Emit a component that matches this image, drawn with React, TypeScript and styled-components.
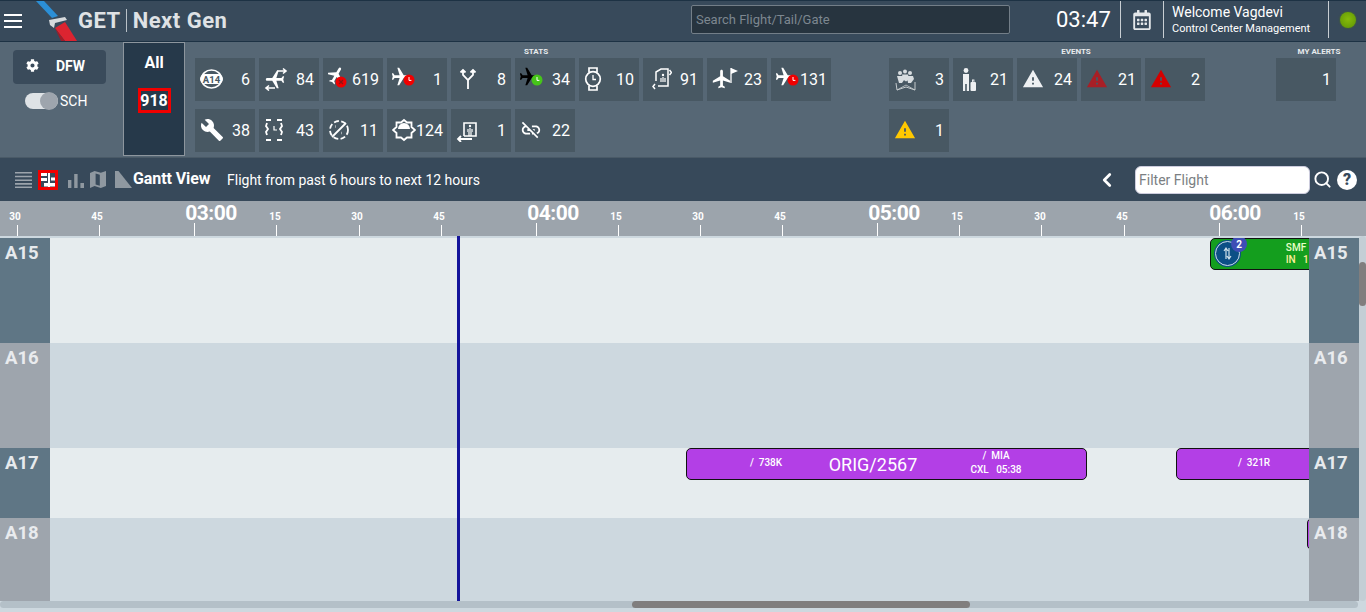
import { createGlobalStyle, styled } from "styled-components";
import { FaCog, FaRegCalendarAlt } from "react-icons/fa";
import { MdBuild, MdLinkOff, MdWarning } from "react-icons/md";
import { ChevronLeft, Search } from "lucide-react";
import type { ReactNode } from "react";

const GlobalStyle = createGlobalStyle`
  html, body {
    margin: 0;
    height: 612px;
    overflow: hidden;
    background: #cdd8df;
    font-family: Roboto, "Liberation Sans", sans-serif;
  }
  * { box-sizing: border-box; }
`;

const Page = styled.div`
  width: 1366px;
  height: 612px;
  display: flex;
  flex-direction: column;
  overflow: hidden;
`;

/* header */
const Header = styled.header`
  height: 42px;
  display: flex;
  align-items: center;
  background: #384a5b;
  border-top: 1px solid #1d3244;
  border-bottom: 1px solid #1d3244;
  flex: none;
`;

const Burger = styled.div`
  width: 18px;
  margin-left: 4px;
  display: flex;
  flex-direction: column;
  gap: 4px;
  i {
    height: 2px;
    background: #fff;
    display: block;
  }
`;

const LogoWrap = styled.div`
  width: 42px;
  height: 40px;
  margin-left: 14px;
  overflow: hidden;
`;

const Brand = styled.div`
  display: flex;
  align-items: center;
  width: 613px;
  padding: 0 0 2px 0;
  font-size: 22px;
  font-weight: 700;
  color: #dfe2e5;
  letter-spacing: 0.5px;
  span + span {
    margin-left: 5px;
    padding-left: 6px;
    border-left: 1px solid #b9c1c8;
    line-height: 23px;
  }
`;

const SearchBox = styled.input`
  width: 319px;
  height: 29px;
  margin-bottom: 3px;
  background: #27343f;
  border: 1px solid #737e88;
  border-radius: 2px;
  padding: 0 4px;
  color: #fff;
  font: 13px Roboto, sans-serif;
  outline: none;
  &::placeholder {
    color: #7d8790;
    opacity: 1;
  }
`;

const Clock = styled.div`
  width: 64px;
  margin-left: 46px;
  padding-bottom: 3px;
  font-size: 22px;
  color: #fff;
  flex: none;
`;

const HeaderCell = styled.div<{ $w: number }>`
  width: ${(p) => p.$w}px;
  height: 37px;
  border-left: 1px solid #c8ced3;
  display: flex;
  align-items: center;
  justify-content: center;
  color: #e4e7ea;
  flex: none;
  margin-top: -3px;
`;

const Welcome = styled.div`
  width: 100%;
  padding-left: 8px;
  color: #fff;
  div:first-child {
    font-size: 14px;
    line-height: 17px;
  }
  div:last-child {
    font-size: 11px;
    line-height: 15px;
  }
`;

const Led = styled.div`
  width: 16px;
  height: 16px;
  border-radius: 50%;
  background: radial-gradient(circle at 50% 45%, #86bb0a, #5d9405);
  box-shadow: 0 0 2px #4f7a10;
`;

/* stats */
const StatsBar = styled.section`
  height: 116px;
  display: flex;
  background: #566775;
  border-bottom: 1px solid #4a5a67;
  flex: none;
`;

const Station = styled.div`
  width: 123px;
  padding: 8px 0 0 13px;
  flex: none;
`;

const StationBtn = styled.div`
  width: 93px;
  height: 34px;
  background: #3a4b5b;
  border-radius: 4px;
  display: flex;
  align-items: center;
  color: #fff;
  font-size: 14px;
  font-weight: 700;
  padding: 0 0 3px 13px;
  gap: 17px;
`;

const ToggleRow = styled.div`
  display: flex;
  align-items: center;
  gap: 2px;
  margin: 9px 0 0 12px;
  font-size: 14px;
  color: #fff;
`;

const Toggle = styled.div`
  width: 33px;
  height: 16px;
  background: #dfe3e6;
  border-radius: 8px;
  position: relative;
  &::after {
    content: "";
    position: absolute;
    right: 0;
    top: -1px;
    width: 18px;
    height: 18px;
    border-radius: 50%;
    background: #9ea5ad;
  }
`;

const AllCard = styled.div`
  width: 62px;
  height: 114px;
  margin-right: 10px;
  background: #26394a;
  border: 1px solid #8d969e;
  display: flex;
  flex-direction: column;
  align-items: center;
  color: #fff;
  font-weight: 700;
  font-size: 16px;
  flex: none;
  padding-top: 10px;
`;

const AllCount = styled.div`
  margin-top: 16px;
  padding: 0 1px;
  width: 33px;
  height: 25px;
  border: 3px solid #f00000;
  display: flex;
  align-items: center;
  justify-content: center;
  font-size: 16px;
`;

const Group = styled.div<{ $w: number; $label: number }>`
  width: ${(p) => p.$w}px;
  flex: none;
  h6 {
    margin: 5px 0 0;
    height: 11px;
    width: ${(p) => p.$label}px;
    text-align: center;
    font-size: 8px;
    font-weight: 700;
    line-height: 9px;
    color: #e8ebee;
  }
`;

const TileGrid = styled.div<{ $cols: number }>`
  display: flex;
  flex-wrap: wrap;
  gap: 8px 4px;
  max-width: ${(p) => p.$cols * 64}px;
`;

const TileBox = styled.div`
  width: 60px;
  height: 43px;
  background: #485863;
  display: flex;
  align-items: center;
  justify-content: space-between;
  padding: 0 5px 1px 5px;
  color: #fff;
  font-size: 16px;
  position: relative;
  svg {
    flex: none;
    display: block;
  }
`;

const Count = styled.span`
  margin-left: auto;
`;

/* toolbar */
const Toolbar = styled.section`
  height: 43px;
  display: flex;
  align-items: center;
  background: #37495a;
  flex: none;
  padding-left: 15px;
  color: #fff;
`;

const ActiveView = styled.div`
  width: 20px;
  height: 20px;
  border: 3px solid #f00000;
  display: flex;
  align-items: center;
  justify-content: center;
  margin: 0 10px 0 6px;
`;

const IconGap = styled.span<{ $w: number }>`
  width: ${(p) => p.$w}px;
  flex: none;
`;

const ViewTitle = styled.div`
  font-weight: 700;
  font-size: 16px;
  letter-spacing: -0.1px;
  width: 94px;
  margin-left: 1px;
  padding-bottom: 2px;
`;

const ViewHint = styled.div`
  font-size: 14px;
  width: 873px;
`;

const BackIcon = styled(ChevronLeft)`
  margin-left: -4px;
`;

const FilterBox = styled.input`
  width: 175px;
  height: 28px;
  margin-left: 17px;
  border: 1px solid #ccd;
  border-radius: 6px;
  padding: 0 3px;
  background: #fff;
  font: 14px Roboto, sans-serif;
  outline: none;
  &::placeholder {
    color: #7b7f83;
    opacity: 1;
  }
`;

const FindIcon = styled(Search)`
  margin-left: 3px;
`;

const HelpDot = styled.div`
  width: 20px;
  height: 20px;
  margin-left: 5px;
  border-radius: 50%;
  background: #fff;
  color: #37495a;
  font-weight: 900;
  font-size: 16px;
  display: flex;
  align-items: center;
  justify-content: center;
`;

/* gantt */
const Ruler = styled.div`
  height: 35px;
  position: relative;
  background: #9ca4ac;
  flex: none;
`;

const Tick = styled.div<{ $x: number; $major?: boolean }>`
  position: absolute;
  left: ${(p) => p.$x}px;
  bottom: 0;
  width: 1px;
  height: ${(p) => (p.$major ? 11 : 13)}px;
  background: #fff;
`;

const TickLabel = styled.div<{ $x: number; $major?: boolean }>`
  position: absolute;
  left: ${(p) => p.$x}px;
  transform: translateX(-50%);
  color: #fff;
  font-weight: 700;
  font-size: ${(p) => (p.$major ? 21 : 10)}px;
  top: ${(p) => (p.$major ? 0 : 10)}px;
  line-height: ${(p) => (p.$major ? 25 : 12)}px;
  letter-spacing: ${(p) => (p.$major ? -0.5 : 0)}px;
`;

const GanttBody = styled.div`
  height: 365px;
  padding-top: 2px;
  position: relative;
  overflow: hidden;
  flex: none;
  background: #cdd8df;
`;

const Row = styled.div<{ $h: number; $alt?: boolean }>`
  height: ${(p) => p.$h}px;
  display: flex;
  background: ${(p) => (p.$alt ? "#cdd8df" : "#e6ecee")};
  width: 1359px;
`;

const GateLabel = styled.div<{ $alt?: boolean }>`
  width: 50px;
  flex: none;
  background: ${(p) => (p.$alt ? "#9ea5ad" : "#5f7685")};
  color: ${(p) => (p.$alt ? "#e9ebee" : "#e6eaed")};
  font-size: 18.5px;
  font-weight: 700;
  line-height: 23px;
  padding: 4px 0 0 5px;
  position: relative;
  z-index: 3;
`;

const Lane = styled.div`
  flex: 1;
  position: relative;
  overflow: hidden;
`;

const NowLine = styled.div`
  position: absolute;
  left: 457px;
  top: 0;
  bottom: 0;
  width: 3px;
  background: #15159b;
  z-index: 2;
`;

const Bar = styled.div<{ $color: string; $x: number; $w: number }>`
  position: absolute;
  top: 0;
  left: ${(p) => p.$x}px;
  width: ${(p) => p.$w}px;
  height: 32px;
  background: ${(p) => p.$color};
  border: 1px solid #111;
  border-radius: 5px;
  color: #fff;
`;

const BarText = styled.div<{ $x: number; $y: number; $size?: number; $color?: string }>`
  position: absolute;
  left: ${(p) => p.$x}px;
  top: ${(p) => p.$y}px;
  white-space: pre;
  font-size: ${(p) => p.$size ?? 10}px;
  font-weight: ${(p) => (p.$size ? 400 : 500)};
  line-height: ${(p) => (p.$size ?? 10) + 2}px;
  color: ${(p) => p.$color ?? "#fff"};
  transform: translateX(-50%);
`;

const TransferDot = styled.div`
  position: absolute;
  left: 4px;
  top: 2px;
  width: 25px;
  height: 25px;
  border-radius: 50%;
  background: #0c4f86;
  border: 1px solid #cfe0ea;
  box-shadow: 0 0 0 1px #0c4f86;
  display: flex;
  align-items: center;
  justify-content: center;
`;

const CountBadge = styled.div`
  position: absolute;
  left: 20px;
  top: -3px;
  width: 16px;
  height: 16px;
  border-radius: 50%;
  background: #3f4db5;
  color: #fff;
  font-size: 10px;
  font-weight: 700;
  display: flex;
  align-items: center;
  justify-content: center;
  z-index: 1;
`;

const HScroll = styled.div`
  height: 7px;
  width: 1358px;
  background: #b4c0c8;
  border-radius: 4px;
  position: relative;
  flex: none;
  &::after {
    content: "";
    position: absolute;
    left: 632px;
    width: 338px;
    top: 0;
    height: 7px;
    border-radius: 4px;
    background: #807e7e;
  }
`;

const VScroll = styled.div`
  position: absolute;
  right: 0;
  top: 0;
  bottom: 0;
  width: 7px;
  background: #c3ced5;
  border-radius: 4px;
  z-index: 4;
  &::after {
    content: "";
    position: absolute;
    left: 0;
    width: 7px;
    top: 26px;
    height: 44px;
    border-radius: 4px;
    background: #807e7e;
  }
`;

const Plane = ({ rotate = 90, color = "#fff" }: { rotate?: number; color?: string }) => (
  <g transform={`rotate(${rotate} 12 12)`} fill={color}>
    <path d="M21 16v-2l-8-5V3.5c0-.83-.67-1.5-1.5-1.5S10 2.67 10 3.5V9l-8 5v2l8-2.5V19l-2 1.5V22l3.5-1 3.5 1v-1.5L13 19v-5.500l8 2.500z" />
  </g>
);

const PlaneClockIcon = ({ badge, planeColor }: { badge: string; planeColor?: string }) => (
  <svg width="24" height="24" viewBox="0 0 24 24">
    <svg x="-2" y="-1" width="22" height="22" viewBox="0 0 24 24">
      <Plane rotate={90} color={planeColor} />
    </svg>
    <circle cx="17" cy="13" r="5.500" fill={badge} />
    <path d="M17 10v3.400h2.400" stroke="#fff" strokeWidth="1" fill="none" />
  </svg>
);

const PlaneCancelIcon = () => (
  <svg width="24" height="24" viewBox="0 0 24 24">
    <svg x="-2" y="-2" width="21" height="21" viewBox="0 0 24 24">
      <Plane rotate={30} />
    </svg>
    <circle cx="13" cy="15" r="5.500" fill="#f00000" />
    <path d="M11 13l4 4M15 13l-4 4" stroke="#8a1515" strokeWidth="1.300" />
  </svg>
);

const GateBadgeIcon = () => (
  <svg width="23" height="20" viewBox="0 0 23 20">
    <ellipse cx="11.500" cy="10" rx="10" ry="9" fill="none" stroke="#fff" strokeWidth="1.600" />
    <rect x="0" y="5" width="23" height="10" rx="5" fill="#fff" />
    <text x="11.500" y="13.500" textAnchor="middle" fontSize="9.500" fontWeight="700" fill="#485863" fontFamily="Roboto">
      A14
    </text>
  </svg>
);

const SwapPlaneIcon = () => (
  <svg width="24" height="24" viewBox="0 0 24 24" fill="none">
    <svg x="0" y="1" width="22" height="22" viewBox="0 0 24 24">
      <Plane rotate={-90} />
    </svg>
    <path d="M13 4h9M19 1.500L22 4l-3 2.500M11 21H2M5 18.500L2 21l3 2.500" stroke="#fff" strokeWidth="1.600" />
  </svg>
);

const ForkIcon = () => (
  <svg width="24" height="24" viewBox="0 0 24 24" fill="none" stroke="#fff" strokeWidth="1.800">
    <path d="M12 22V13L7 8V3M12 13l5-5V3M4.500 5.500L7 3l2.500 2.500M14.500 5.500L17 3l2.500 2.500" />
  </svg>
);

const WatchIcon = () => (
  <svg width="22" height="24" viewBox="0 0 22 24" fill="none" stroke="#fff" strokeWidth="1.700">
    <circle cx="9" cy="12" r="7.300" />
    <path d="M5 5.500V1h8v4.500M5 18.500V23h8v-4.500" />
    <path d="M9 8v4.500h3" strokeWidth="1.300" />
  </svg>
);

const DashedFrameIcon = () => (
  <svg width="20" height="24" viewBox="0 0 20 24" fill="none" stroke="#fff" strokeWidth="1.800">
    <path d="M2 2h5M13 2h5M2 22h5M13 22h5M3 5l-1 3 2 3-2 3 1 3M17 5l1 3-2 3 2 3-1 3" />
    <path d="M10 8v4h3" strokeWidth="1.200" />
  </svg>
);

const NoPercentIcon = () => (
  <svg width="22" height="22" viewBox="0 0 22 22" fill="none" stroke="#fff" strokeWidth="1.800">
    <circle cx="11" cy="11" r="9" strokeDasharray="5 2.400" />
    <path d="M4 18L18 4" />
    <path d="M7.500 7.500h.5M13.500 14h.5" strokeWidth="2.400" />
  </svg>
);

const SunBadgeIcon = () => (
  <svg width="24" height="24" viewBox="0 0 24 24" fill="none" stroke="#fff" strokeWidth="1.800">
    <path d="M12 2l3 2.500h4.500V9L23 12l-3.500 3v4.500H15L12 22l-3-2.500H4.500V15L1 12l3.500-3V4.500H9z" />
    <path d="M6 11a6 6 0 0 1 12 0z" fill="#fff" stroke="none" />
  </svg>
);

const GateWalkIcon = () => (
  <svg width="22" height="24" viewBox="0 0 22 24" fill="none" stroke="#fff" strokeWidth="1.600">
    <path d="M8 18V5h12v13H8" />
    <circle cx="14" cy="8" r="1.200" fill="#fff" stroke="none" />
    <path d="M14 10v4M12 11v3M16 11v3M13 18v-4M15 18v-4" strokeWidth="1.200" />
    <path d="M16 21H2M5 18l-3 3 3 3" strokeWidth="1.800" />
  </svg>
);

const DoorSwapIcon = () => (
  <svg width="24" height="24" viewBox="-4 0 24 24" fill="none" stroke="#fff" strokeWidth="1.500">
    <path d="M4 14V5l5-3h7v17H6" />
    <circle cx="11" cy="8" r="1.200" fill="#fff" stroke="none" />
    <path d="M11 10v5M9 11v4M13 11v4" strokeWidth="1.200" />
    <path d="M17.500 3l2 2.500-2 2.500M3 17l-2 2.500L3 22" strokeWidth="1.500" />
  </svg>
);

const PlaneFlagIcon = () => (
  <svg width="28" height="24" viewBox="0 0 28 24">
    <svg x="-1" y="1" width="22" height="22" viewBox="0 0 24 24">
      <Plane rotate={0} />
    </svg>
    <path d="M19 1v15" stroke="#fff" strokeWidth="1.300" />
    <path d="M19 1l7 3-7 3z" fill="#fff" />
  </svg>
);

const CrowdIcon = () => (
  <svg width="24" height="24" viewBox="0 0 24 24" fill="none">
    <g fill="#d8dde0">
      <circle cx="6" cy="6" r="2" />
      <circle cx="11" cy="4.500" r="2" />
      <circle cx="16" cy="6" r="2" />
      <path d="M3 9h6l1 4-2 3H5zM8 7.500h6l1 5-3 2-3-2zM13 9h6l1 3-3 4h-3z" />
    </g>
    <path d="M2 16l1 7 9-3 9 3v-8" stroke="#c4cacd" strokeWidth="1" />
    <path d="M3 23l9-5 9 5" stroke="#c4cacd" strokeWidth="0.800" />
  </svg>
);

const PassengerBagIcon = () => (
  <svg width="24" height="24" viewBox="0 0 24 24">
    <g fill="#eef0f2">
      <circle cx="8" cy="3.500" r="2.400" />
      <path d="M5 7h6v17H8.800v-7H7.200v7H5z" />
      <rect x="12.500" y="15" width="5.500" height="9" rx="1" />
      <path d="M14 12.500h2.400V15h-.9v-1.600h-.6V15H14z" />
    </g>
  </svg>
);

const ListIcon = () => (
  <svg width="17" height="17" viewBox="0 0 17 17" fill="#9ca4ac">
    <path d="M0 1h17v1.600H0zM0 4.700h17v1.600H0zM0 8.400h17V10H0zM0 12.100h17v1.600H0zM0 15.400h17V17H0z" />
  </svg>
);

const GanttIcon = () => (
  <svg width="14" height="14" viewBox="0 0 14 14" fill="#fff">
    <path d="M0 0h6v3H0zM7 0h2v14H7zM0 5h6v3H0zM10 4.500h4v3h-4zM3 10h4v3.500H3zM9 10h5v3.500H9z" />
  </svg>
);

const ChartIcon = () => (
  <svg width="16" height="16" viewBox="0 0 16 16" fill="#8f98a0">
    <path d="M0 8h3.400v8H0zM6.200 2h3.400v14H6.200zM12.400 11H16v5h-3.600z" />
  </svg>
);

const MapIcon = () => (
  <svg width="16" height="17" viewBox="0 0 16 17" fill="#8f98a0">
    <path d="M0 2l4.600-2 6.200 1.800L16 0v15l-5.200 2-6.200-2L0 17zM5.600 2.500v11l4.200 1.200v-11z" fillRule="evenodd" />
  </svg>
);

const TailIcon = () => (
  <svg width="17" height="17" viewBox="0 0 17 17" fill="#8f98a0">
    <path d="M0 0h3.500L17 17H0z" />
  </svg>
);

const SwapArrows = () => (
  <svg width="11" height="15" viewBox="0 0 11 15" fill="none" stroke="#cfe0ea" strokeWidth="1.200">
    <path d="M4 13V3M2 5l2-3 2 3M7 2v10M5 10l2 3 2-3" />
  </svg>
);

const Logo = () => (
  <svg width="42" height="40" viewBox="0 0 42 40">
    <path d="M0 0h8l14 15-6 2z" fill="#2b8fd6" />
    <path d="M13 19l16-3 2 3-12 3-1 5-4-3z" fill="#d5d9dc" />
    <path d="M19 27l10-6 12 19H29z" fill="#dc2430" />
    <path d="M19 27l10 13h-4z" fill="#a01c28" />
  </svg>
);

function Tile({ icon, count }: { icon?: ReactNode; count: number }) {
  return (
    <TileBox>
      {icon}
      <Count>{count}</Count>
    </TileBox>
  );
}

const stats: { icon: ReactNode; count: number }[] = [
  { icon: <GateBadgeIcon />, count: 6 },
  { icon: <SwapPlaneIcon />, count: 84 },
  { icon: <PlaneCancelIcon />, count: 619 },
  { icon: <PlaneClockIcon badge="#f00000" />, count: 1 },
  { icon: <ForkIcon />, count: 8 },
  { icon: <PlaneClockIcon badge="#46c51a" planeColor="#000" />, count: 34 },
  { icon: <WatchIcon />, count: 10 },
  { icon: <DoorSwapIcon />, count: 91 },
  { icon: <PlaneFlagIcon />, count: 23 },
  { icon: <PlaneClockIcon badge="#f00000" />, count: 131 },
  { icon: <MdBuild size={24} />, count: 38 },
  { icon: <DashedFrameIcon />, count: 43 },
  { icon: <NoPercentIcon />, count: 11 },
  { icon: <SunBadgeIcon />, count: 124 },
  { icon: <GateWalkIcon />, count: 1 },
  { icon: <MdLinkOff size={22} />, count: 22 },
];

const events: { icon: ReactNode; count: number }[] = [
  { icon: <CrowdIcon />, count: 3 },
  { icon: <PassengerBagIcon />, count: 21 },
  { icon: <MdWarning size={22} color="#eef0f2" />, count: 24 },
  { icon: <MdWarning size={22} color="#a81f26" />, count: 21 },
  { icon: <MdWarning size={22} color="#d40000" />, count: 2 },
  { icon: <MdWarning size={22} color="#ffc800" />, count: 1 },
];

const ticks = [
  { x: 17, label: "30", lx: 15 },
  { x: 99, label: "45", lx: 97 },
  { x: 194, label: "03:00", lx: 211, major: true },
  { x: 276, label: "15", lx: 275 },
  { x: 359, label: "30", lx: 357 },
  { x: 441, label: "45", lx: 439 },
  { x: 536, label: "04:00", lx: 553, major: true },
  { x: 618, label: "15", lx: 616 },
  { x: 700, label: "30", lx: 698 },
  { x: 782, label: "45", lx: 780 },
  { x: 877, label: "05:00", lx: 894, major: true },
  { x: 959, label: "15", lx: 957 },
  { x: 1041, label: "30", lx: 1040 },
  { x: 1124, label: "45", lx: 1122 },
  { x: 1219, label: "06:00", lx: 1235, major: true },
  { x: 1301, label: "15", lx: 1299 },
];

function App() {
  return (
    <Page>
      <GlobalStyle />
      <Header>
        <Burger>
          <i />
          <i />
          <i />
        </Burger>
        <LogoWrap>
          <Logo />
        </LogoWrap>
        <Brand>
          <span>GET</span>
          <span>Next Gen</span>
        </Brand>
        <SearchBox placeholder="Search Flight/Tail/Gate" />
        <Clock>03:47</Clock>
        <HeaderCell $w={43}>
          <FaRegCalendarAlt size={20} />
        </HeaderCell>
        <HeaderCell $w={165}>
          <Welcome>
            <div>Welcome Vagdevi</div>
            <div>Control Center Management</div>
          </Welcome>
        </HeaderCell>
        <HeaderCell $w={38}>
          <Led />
        </HeaderCell>
      </Header>

      <StatsBar>
        <Station>
          <StationBtn>
            <FaCog size={13} />
            DFW
          </StationBtn>
          <ToggleRow>
            <Toggle />
            SCH
          </ToggleRow>
        </Station>
        <AllCard>
          All
          <AllCount>918</AllCount>
        </AllCard>
        <Group $w={694} $label={682}>
          <h6>STATS</h6>
          <TileGrid $cols={10}>
            {stats.map((s, i) => (
              <Tile key={i} icon={s.icon} count={s.count} />
            ))}
          </TileGrid>
        </Group>
        <Group $w={387} $label={374}>
          <h6>EVENTS</h6>
          <TileGrid $cols={5}>
            {events.map((s, i) => (
              <Tile key={i} icon={s.icon} count={s.count} />
            ))}
          </TileGrid>
        </Group>
        <Group $w={80} $label={86}>
          <h6>MY ALERTS</h6>
          <TileGrid $cols={1}>
            <Tile count={1} />
          </TileGrid>
        </Group>
      </StatsBar>

      <Toolbar>
        <ListIcon />
        <ActiveView>
          <GanttIcon />
        </ActiveView>
        <ChartIcon />
        <IconGap $w={6} />
        <MapIcon />
        <IconGap $w={9} />
        <TailIcon />
        <ViewTitle>Gantt View</ViewTitle>
        <ViewHint>Flight from past 6 hours to next 12 hours</ViewHint>
        <BackIcon size={22} strokeWidth={3} />
        <FilterBox placeholder="Filter Flight" />
        <FindIcon size={19} strokeWidth={2.4} />
        <HelpDot>?</HelpDot>
      </Toolbar>

      <Ruler>
        {ticks.map((t) => (
          <div key={t.x}>
            <Tick $x={t.x} $major={!t.major} />
            <TickLabel $x={t.lx} $major={t.major}>
              {t.label}
            </TickLabel>
          </div>
        ))}
      </Ruler>

      <GanttBody>
        <Row $h={105}>
          <GateLabel>A15</GateLabel>
          <Lane>
            <Bar $color="#149e1e" $x={1160} $w={120}>
              <TransferDot>
                <SwapArrows />
              </TransferDot>
              <CountBadge>2</CountBadge>
              <BarText $x={85} $y={3} $color="#e6ffc8">
                SMF
              </BarText>
              <BarText $x={89} $y={15} $color="#ffef9a">
                IN   11
              </BarText>
            </Bar>
          </Lane>
          <GateLabel>A15</GateLabel>
        </Row>
        <Row $h={105} $alt>
          <GateLabel $alt>A16</GateLabel>
          <Lane />
          <GateLabel $alt>A16</GateLabel>
        </Row>
        <Row $h={70}>
          <GateLabel>A17</GateLabel>
          <Lane>
            <Bar $color="#b33fe6" $x={636} $w={401}>
              <BarText $x={79} $y={8}>
                /  738K
              </BarText>
              <BarText $x={186} $y={6} $size={18}>
                ORIG/2567
              </BarText>
              <BarText $x={309} $y={1}>
                /  MIA
              </BarText>
              <BarText $x={309} $y={15}>
                CXL   05:38
              </BarText>
            </Bar>
            <Bar $color="#b33fe6" $x={1126} $w={200}>
              <BarText $x={77} $y={8}>
                /  321R
              </BarText>
            </Bar>
          </Lane>
          <GateLabel>A17</GateLabel>
        </Row>
        <Row $h={83} $alt>
          <GateLabel $alt>A18</GateLabel>
          <Lane>
            <Bar $color="#b33fe6" $x={1257} $w={40} />
          </Lane>
          <GateLabel $alt>A18</GateLabel>
        </Row>
        <NowLine />
        <VScroll />
      </GanttBody>
      <HScroll />
    </Page>
  );
}

export default App;
